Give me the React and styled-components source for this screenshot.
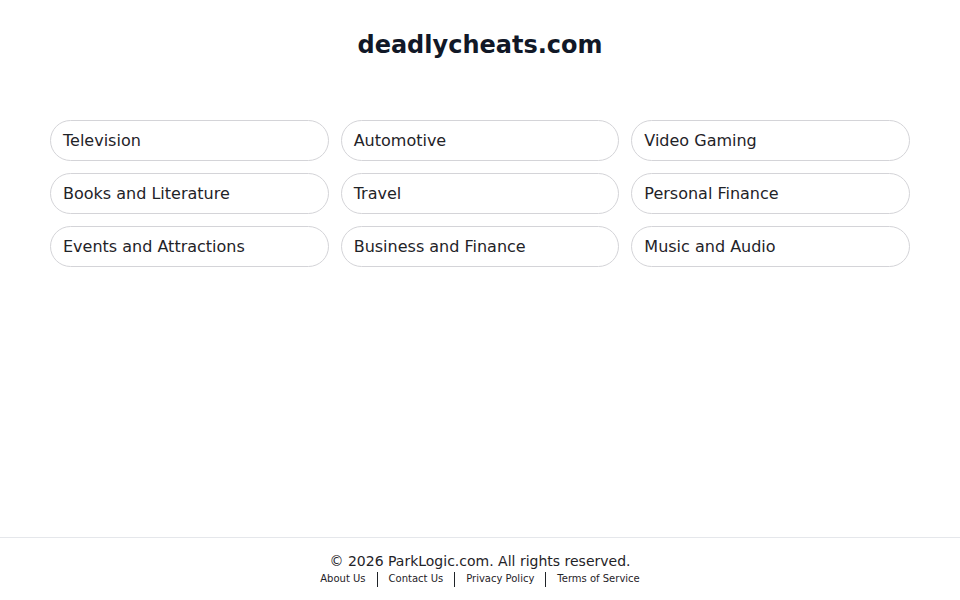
import styled, { createGlobalStyle } from 'styled-components'

const GlobalStyle = createGlobalStyle`
    html, body {
        margin: 0;
        padding: 0;
        background: #ffffff;
        font-family: "DejaVu Sans", "Noto Sans", sans-serif;
        color: #111827;
    }
    * { box-sizing: border-box; }
`

const Page = styled.div`
    min-height: 100vh;
    display: flex;
    flex-direction: column;
`
const Main = styled.main`
    flex: 1;
    width: 100%;
    max-width: 960px;
    margin: 0 auto;
    padding: 29px 50px 0;
`
const Title = styled.h1`
    margin: 0;
    font-size: 24px;
    line-height: 32px;
    font-weight: 700;
    text-align: center;
    color: #111827;
`
const Grid = styled.div`
    margin-top: 59px;
    display: grid;
    grid-template-columns: repeat(3, 1fr);
    gap: 12px;
`
const Pill = styled.a`
    display: flex;
    align-items: center;
    height: 41px;
    padding: 0 12px;
    border: 1px solid #d4d4d8;
    border-radius: 9999px;
    font-size: 16px;
    color: #1f2328;
    text-decoration: none;
    cursor: pointer;
`
const Footer = styled.footer`
    border-top: 1px solid #e5e7eb;
    padding: 13px 0 13px;
    display: flex;
    flex-direction: column;
    align-items: center;
`
const Copy = styled.p`
    margin: 0;
    font-size: 14px;
    line-height: 20px;
    color: #1f2328;
`
const Links = styled.nav`
    display: flex;
    align-items: center;
    gap: 11px;
    font-size: 10px;
    line-height: 16px;
`
const FooterLink = styled.a`
    color: #1f2328;
    text-decoration: none;
`
const Sep = styled.span`
    width: 1px;
    height: 15px;
    background: #1f2328;
`

const topics = [
    'Television', 'Automotive', 'Video Gaming',
    'Books and Literature', 'Travel', 'Personal Finance',
    'Events and Attractions', 'Business and Finance', 'Music and Audio',
]

const footerLinks = ['About Us', 'Contact Us', 'Privacy Policy', 'Terms of Service']

const App = () => {
    return (
        <Page>
            <GlobalStyle />
            <Main>
                <Title>deadlycheats.com</Title>
                <Grid>
                    {topics.map((t) => (
                        <Pill key={t}>{t}</Pill>
                    ))}
                </Grid>
            </Main>
            <Footer>
                <Copy>© 2026 ParkLogic.com. All rights reserved.</Copy>
                <Links>
                    {footerLinks.flatMap((l, i) => [
                        i > 0 ? <Sep key={l + '-sep'} /> : null,
                        <FooterLink key={l}>{l}</FooterLink>,
                    ])}
                </Links>
            </Footer>
        </Page>
    );
};

export default App;
